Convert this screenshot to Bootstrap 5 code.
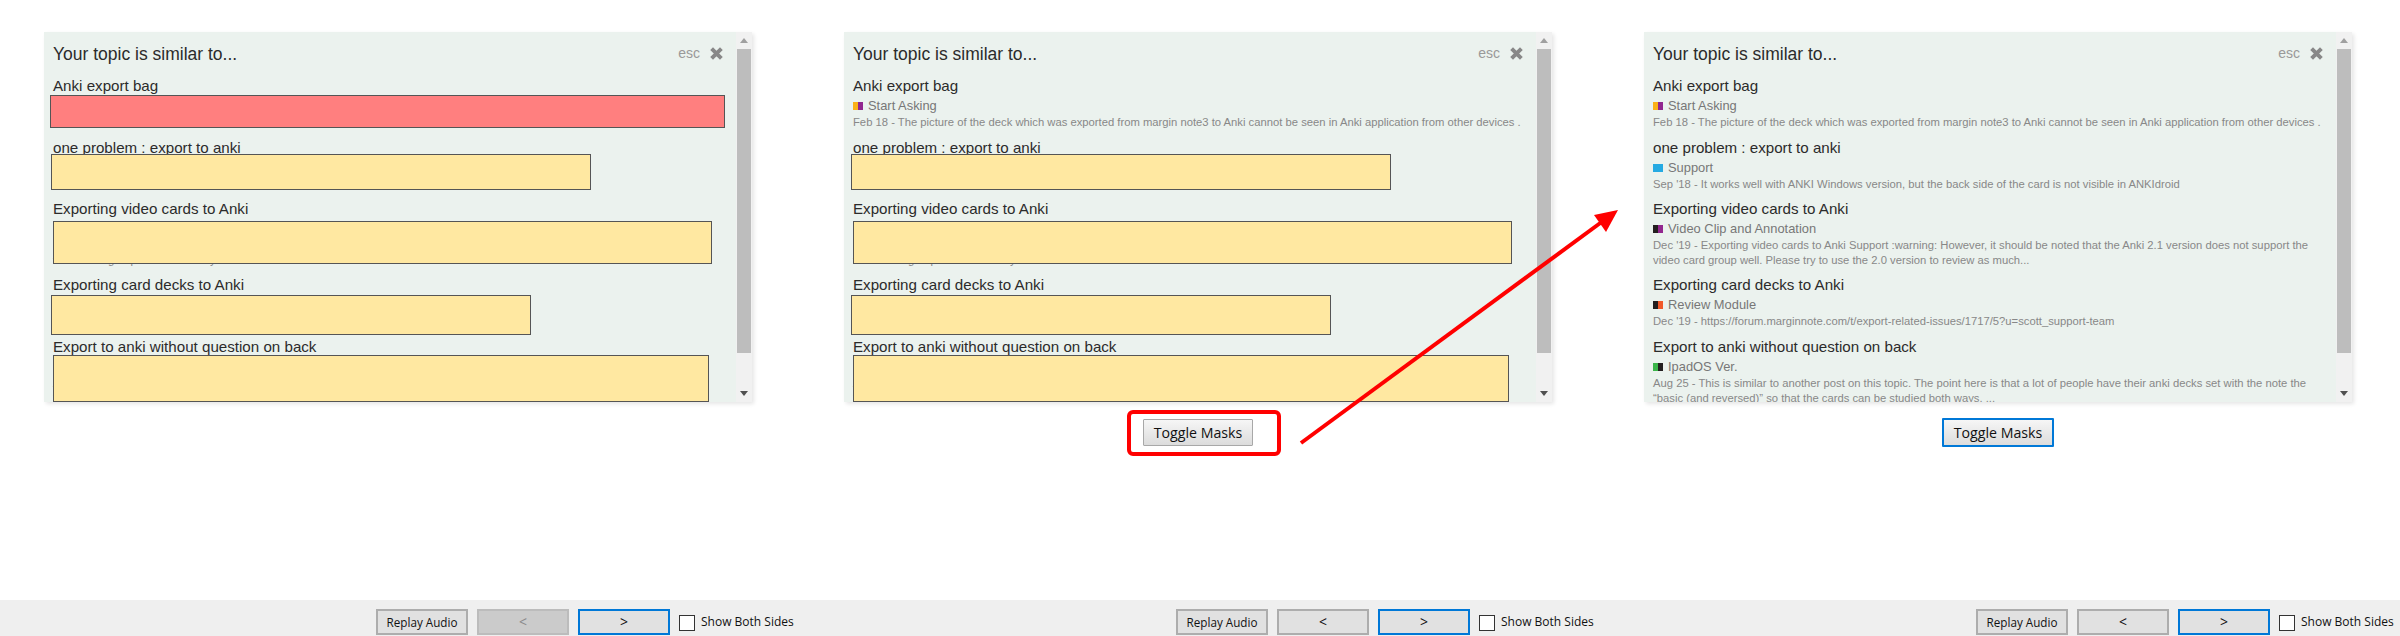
<!DOCTYPE html>
<html lang="en">
<head>
    <meta charset="UTF-8">
    <meta name="viewport" content="width=device-width, initial-scale=1.0">
    <title>Toggle Masks</title>
    <link rel="stylesheet" href="https://cdn.jsdelivr.net/npm/bootstrap@5.3.0/dist/css/bootstrap.min.css">
    <style>
        html, body { height: 636px; overflow: hidden; background: #fff; }
        .stage { height: 636px; }
        .side { height: 636px; }
        .panel-box { position: relative; width: 708px; height: 370px; margin: 32px 0 0 44px; background: #ebf2ee; box-shadow: 2px 2px 4px rgba(0,0,0,.1); font-family: "Liberation Sans", Arial, sans-serif; overflow: hidden; }
        .panel-text { width: 692px; padding: 0 0 0 9px; overflow: hidden; }
        .panel-head { height: 43px; padding-right: 13px; }
        .panel-head h3 { font-size: 17.5px; line-height: 42px; font-weight: 400; color: #2b2b2b; margin: 0; }
        .esc-txt { font-size: 14px; color: #999; margin-right: 10px; }
        .hit { height: 61.5px; padding-top: 1px; }
        .hit.tall { height: 76px; }
        .hit-title { font-size: 15.15px; line-height: 20px; color: #2b2b2b; }
        .hit-cat { font-size: 12.9px; line-height: 19px; color: #777; }
        .cat-sq { display: inline-flex; width: 10px; height: 8px; margin-right: 5px; }
        .cat-sq i { flex: 1; }
        .hit-text { font-size: 11.25px; line-height: 15px; color: #888; white-space: normal; width: 672px; }
        .mask-bar { position: absolute; background: #ffe8a1; border: 1px solid #555; }
        .mask-red { background: #ff7f7f; left: 6px; top: 63px; width: 675px; height: 33px; }
        .mask-two { left: 7px; top: 122px; width: 540px; height: 36px; }
        .mask-three { left: 9px; top: 189px; width: 659px; height: 43px; }
        .mask-four { left: 7px; top: 263px; width: 480px; height: 40px; }
        .mask-five { left: 9px; top: 323px; width: 656px; height: 47px; }
        .fake-scroll { width: 16px; background: #f1f1f1; position: relative; padding: 0 1px; }
        .scroll-up { height: 17px; color: #999; }
        .scroll-thumb { height: 304px; background: #bdbdbd; }
        .scroll-down { height: 49px; padding-bottom: 6px; }
        .toggle-row { height: 46px; padding-top: 17px; margin-left: 44px; width: 708px; }
        .toggle-btn { width: 110px; height: 27px; padding: 0; font-family: "Open Sans", sans-serif; font-size: 14.2px; color: #111; background: linear-gradient(#f6f6f6, #dcdcdc); border: 1px solid #a8a8a8; border-radius: 1px; }
        .toggle-btn.focused { border: 2px solid #0078d7; width: 112px; height: 29px; margin-top: -1px; }
        .foot-bar { height: 36px; background: #efefef; padding: 9px 0 0 376px; font-family: "Open Sans", sans-serif; font-size: 12px; color: #111; }
        .foot-btn { width: 92px; height: 26px; padding: 0; background: #e1e1e1; border: 2px solid #adadad; color: #111; font-size: 11.7px; border-radius: 0; margin-right: 9px; line-height: 20px; }
        .foot-btn.arrow-btn { font-size: 14px; }
        .foot-btn.off { background: #cbcbcb; border-color: #bcbcbc; color: #8a8a8a; }
        .foot-btn.focused { border-color: #0078d7; }
        .box-check { width: 16px; height: 16px; background: #fff; border: 1px solid #333; margin: 6px 6px 0 0; }
        .foot-label { line-height: 26px; }
        .overlay-art { position: absolute; left: 0; top: 0; pointer-events: none; }
        .sq-yellow { background: #fbb117; }
        .sq-purple { background: #92278f; }
        .sq-blue { background: #25aae2; }
        .sq-black { background: #231f20; }
        .sq-orange { background: #f1592a; }
        .sq-green { background: #3ab54a; }
    </style>
</head>
<body>

    <div class="row g-0 stage">

        <div class="col-4 side d-flex flex-column">
            <div class="flex-grow-1">
                <div class="panel-box d-flex justify-content-between">
                    <div class="panel-text">
                        <div class="panel-head d-flex justify-content-between align-items-center">
                            <h3>Your topic is similar to...</h3>
                            <div class="d-flex align-items-center"><span class="esc-txt">esc</span><svg width="13" height="13" viewBox="0 0 12 12"><path d="M1.5 1.5L10.5 10.5M10.5 1.5L1.5 10.5" stroke="#888" stroke-width="3.6"/></svg></div>
                        </div>
                        <div class="hit">
                            <div class="hit-title">Anki export bag</div>
                            <div class="hit-cat"><span class="cat-sq"><i class="sq-yellow"></i><i class="sq-purple"></i></span>Start Asking</div>
                            <div class="hit-text">Feb 18 - The picture of the deck which was exported from margin note3 to Anki cannot be seen in Anki application from other devices .</div>
                        </div>
                        <div class="hit">
                            <div class="hit-title">one problem : export to anki</div>
                            <div class="hit-cat"><span class="cat-sq"><i class="sq-blue"></i></span>Support</div>
                            <div class="hit-text">Sep '18 - It works well with ANKI Windows version, but the back side of the card is not visible in ANKIdroid</div>
                        </div>
                        <div class="hit tall">
                            <div class="hit-title">Exporting video cards to Anki</div>
                            <div class="hit-cat"><span class="cat-sq"><i class="sq-black"></i><i class="sq-purple"></i></span>Video Clip and Annotation</div>
                            <div class="hit-text">Dec '19 - Exporting video cards to Anki Support :warning: However, it should be noted that the Anki 2.1 version does not support the video card group well. Please try to use the 2.0 version to review as much...</div>
                        </div>
                        <div class="hit">
                            <div class="hit-title">Exporting card decks to Anki</div>
                            <div class="hit-cat"><span class="cat-sq"><i class="sq-black"></i><i class="sq-orange"></i></span>Review Module</div>
                            <div class="hit-text">Dec '19 - https://forum.marginnote.com/t/export-related-issues/1717/5?u=scott_support-team</div>
                        </div>
                        <div class="hit tall">
                            <div class="hit-title">Export to anki without question on back</div>
                            <div class="hit-cat"><span class="cat-sq"><i class="sq-green"></i><i class="sq-black"></i></span>IpadOS Ver.</div>
                            <div class="hit-text">Aug 25 - This is similar to another post on this topic. The point here is that a lot of people have their anki decks set with the note the “basic (and reversed)” so that the cards can be studied both ways. ...</div>
                        </div>
                    </div>
                    <div class="fake-scroll">
                        <div class="scroll-up d-flex justify-content-center align-items-center"><svg width="8" height="5" viewBox="0 0 8 5"><path d="M4 0L8 5H0Z" fill="#a0a0a0"/></svg></div>
                        <div class="scroll-thumb"></div>
                        <div class="scroll-down d-flex justify-content-center align-items-end"><svg width="8" height="5" viewBox="0 0 8 5"><path d="M0 0H8L4 5Z" fill="#505050"/></svg></div>
                    </div>
                    <div class="mask-bar mask-red"></div>
                    <div class="mask-bar mask-two"></div>
                    <div class="mask-bar mask-three"></div>
                    <div class="mask-bar mask-four"></div>
                    <div class="mask-bar mask-five"></div>
                </div>
            </div>
            <div class="foot-bar d-flex">
                <button class="foot-btn">Replay Audio</button>
                <button class="foot-btn arrow-btn off" disabled>&lt;</button>
                <button class="foot-btn arrow-btn focused">&gt;</button>
                <span class="box-check"></span>
                <span class="foot-label">Show Both Sides</span>
            </div>
        </div>

        <div class="col-4 side d-flex flex-column">
            <div class="flex-grow-1">
                <div class="panel-box d-flex justify-content-between">
                    <div class="panel-text">
                        <div class="panel-head d-flex justify-content-between align-items-center">
                            <h3>Your topic is similar to...</h3>
                            <div class="d-flex align-items-center"><span class="esc-txt">esc</span><svg width="13" height="13" viewBox="0 0 12 12"><path d="M1.5 1.5L10.5 10.5M10.5 1.5L1.5 10.5" stroke="#888" stroke-width="3.6"/></svg></div>
                        </div>
                        <div class="hit">
                            <div class="hit-title">Anki export bag</div>
                            <div class="hit-cat"><span class="cat-sq"><i class="sq-yellow"></i><i class="sq-purple"></i></span>Start Asking</div>
                            <div class="hit-text">Feb 18 - The picture of the deck which was exported from margin note3 to Anki cannot be seen in Anki application from other devices .</div>
                        </div>
                        <div class="hit">
                            <div class="hit-title">one problem : export to anki</div>
                            <div class="hit-cat"><span class="cat-sq"><i class="sq-blue"></i></span>Support</div>
                            <div class="hit-text">Sep '18 - It works well with ANKI Windows version, but the back side of the card is not visible in ANKIdroid</div>
                        </div>
                        <div class="hit tall">
                            <div class="hit-title">Exporting video cards to Anki</div>
                            <div class="hit-cat"><span class="cat-sq"><i class="sq-black"></i><i class="sq-purple"></i></span>Video Clip and Annotation</div>
                            <div class="hit-text">Dec '19 - Exporting video cards to Anki Support :warning: However, it should be noted that the Anki 2.1 version does not support the video card group well. Please try to use the 2.0 version to review as much...</div>
                        </div>
                        <div class="hit">
                            <div class="hit-title">Exporting card decks to Anki</div>
                            <div class="hit-cat"><span class="cat-sq"><i class="sq-black"></i><i class="sq-orange"></i></span>Review Module</div>
                            <div class="hit-text">Dec '19 - https://forum.marginnote.com/t/export-related-issues/1717/5?u=scott_support-team</div>
                        </div>
                        <div class="hit tall">
                            <div class="hit-title">Export to anki without question on back</div>
                            <div class="hit-cat"><span class="cat-sq"><i class="sq-green"></i><i class="sq-black"></i></span>IpadOS Ver.</div>
                            <div class="hit-text">Aug 25 - This is similar to another post on this topic. The point here is that a lot of people have their anki decks set with the note the “basic (and reversed)” so that the cards can be studied both ways. ...</div>
                        </div>
                    </div>
                    <div class="fake-scroll">
                        <div class="scroll-up d-flex justify-content-center align-items-center"><svg width="8" height="5" viewBox="0 0 8 5"><path d="M4 0L8 5H0Z" fill="#a0a0a0"/></svg></div>
                        <div class="scroll-thumb"></div>
                        <div class="scroll-down d-flex justify-content-center align-items-end"><svg width="8" height="5" viewBox="0 0 8 5"><path d="M0 0H8L4 5Z" fill="#505050"/></svg></div>
                    </div>
                    <div class="mask-bar mask-two"></div>
                    <div class="mask-bar mask-three"></div>
                    <div class="mask-bar mask-four"></div>
                    <div class="mask-bar mask-five"></div>
                </div>
                <div class="toggle-row d-flex justify-content-center">
                    <button class="toggle-btn">Toggle Masks</button>
                </div>
            </div>
            <div class="foot-bar d-flex">
                <button class="foot-btn">Replay Audio</button>
                <button class="foot-btn arrow-btn">&lt;</button>
                <button class="foot-btn arrow-btn focused">&gt;</button>
                <span class="box-check"></span>
                <span class="foot-label">Show Both Sides</span>
            </div>
        </div>

        <div class="col-4 side d-flex flex-column">
            <div class="flex-grow-1">
                <div class="panel-box d-flex justify-content-between">
                    <div class="panel-text">
                        <div class="panel-head d-flex justify-content-between align-items-center">
                            <h3>Your topic is similar to...</h3>
                            <div class="d-flex align-items-center"><span class="esc-txt">esc</span><svg width="13" height="13" viewBox="0 0 12 12"><path d="M1.5 1.5L10.5 10.5M10.5 1.5L1.5 10.5" stroke="#888" stroke-width="3.6"/></svg></div>
                        </div>
                        <div class="hit">
                            <div class="hit-title">Anki export bag</div>
                            <div class="hit-cat"><span class="cat-sq"><i class="sq-yellow"></i><i class="sq-purple"></i></span>Start Asking</div>
                            <div class="hit-text">Feb 18 - The picture of the deck which was exported from margin note3 to Anki cannot be seen in Anki application from other devices .</div>
                        </div>
                        <div class="hit">
                            <div class="hit-title">one problem : export to anki</div>
                            <div class="hit-cat"><span class="cat-sq"><i class="sq-blue"></i></span>Support</div>
                            <div class="hit-text">Sep '18 - It works well with ANKI Windows version, but the back side of the card is not visible in ANKIdroid</div>
                        </div>
                        <div class="hit tall">
                            <div class="hit-title">Exporting video cards to Anki</div>
                            <div class="hit-cat"><span class="cat-sq"><i class="sq-black"></i><i class="sq-purple"></i></span>Video Clip and Annotation</div>
                            <div class="hit-text">Dec '19 - Exporting video cards to Anki Support :warning: However, it should be noted that the Anki 2.1 version does not support the video card group well. Please try to use the 2.0 version to review as much...</div>
                        </div>
                        <div class="hit">
                            <div class="hit-title">Exporting card decks to Anki</div>
                            <div class="hit-cat"><span class="cat-sq"><i class="sq-black"></i><i class="sq-orange"></i></span>Review Module</div>
                            <div class="hit-text">Dec '19 - https://forum.marginnote.com/t/export-related-issues/1717/5?u=scott_support-team</div>
                        </div>
                        <div class="hit tall">
                            <div class="hit-title">Export to anki without question on back</div>
                            <div class="hit-cat"><span class="cat-sq"><i class="sq-green"></i><i class="sq-black"></i></span>IpadOS Ver.</div>
                            <div class="hit-text">Aug 25 - This is similar to another post on this topic. The point here is that a lot of people have their anki decks set with the note the “basic (and reversed)” so that the cards can be studied both ways. ...</div>
                        </div>
                    </div>
                    <div class="fake-scroll">
                        <div class="scroll-up d-flex justify-content-center align-items-center"><svg width="8" height="5" viewBox="0 0 8 5"><path d="M4 0L8 5H0Z" fill="#a0a0a0"/></svg></div>
                        <div class="scroll-thumb"></div>
                        <div class="scroll-down d-flex justify-content-center align-items-end"><svg width="8" height="5" viewBox="0 0 8 5"><path d="M0 0H8L4 5Z" fill="#505050"/></svg></div>
                    </div>
                </div>
                <div class="toggle-row d-flex justify-content-center">
                    <button class="toggle-btn focused">Toggle Masks</button>
                </div>
            </div>
            <div class="foot-bar d-flex">
                <button class="foot-btn">Replay Audio</button>
                <button class="foot-btn arrow-btn">&lt;</button>
                <button class="foot-btn arrow-btn focused">&gt;</button>
                <span class="box-check"></span>
                <span class="foot-label">Show Both Sides</span>
            </div>
        </div>

    </div>

    <!-- red callout drawn over the screenshots -->
    <svg class="overlay-art" width="2400" height="636" viewBox="0 0 2400 636">
        <rect x="1129" y="412" width="150" height="42" rx="4" fill="none" stroke="#ff0000" stroke-width="4"/>
        <path d="M1301 443L1603 221" stroke="#ff0000" stroke-width="4" fill="none"/>
        <path d="M1618 210L1606 232L1594 215Z" fill="#ff0000"/>
    </svg>

    <script src="https://cdn.jsdelivr.net/npm/bootstrap@5.3.0/dist/js/bootstrap.bundle.min.js"></script>
</body>
</html>
